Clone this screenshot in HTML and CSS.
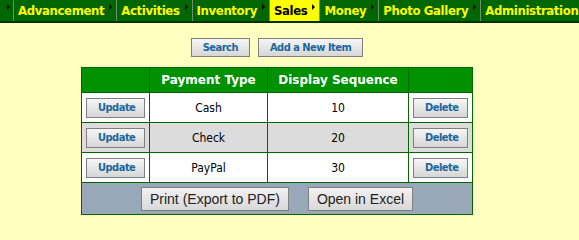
FILE: index.html
```html
<!DOCTYPE html>
<html lang="en">
<head>
    <meta charset="UTF-8">
    <title>Sales - Payment Types</title>
    <link rel="stylesheet" href="styles.css">
</head>
<body>
    <div class="menu">
        <span class="menu-item stub"></span>
        <span class="menu-item">Advancement</span>
        <span class="menu-item">Activities</span>
        <span class="menu-item">Inventory</span>
        <span class="menu-item active">Sales</span>
        <span class="menu-item">Money</span>
        <span class="menu-item">Photo Gallery</span>
        <span class="menu-item last">Administration</span>
    </div>

    <div class="content">
        <div class="actions">
            <button class="btn">Search</button>
            <button class="btn">Add a New Item</button>
        </div>

        <table class="grid">
            <tr class="grid-head">
                <th class="col-edit"></th>
                <th class="col-type">Payment Type</th>
                <th class="col-seq">Display Sequence</th>
                <th class="col-del"></th>
            </tr>
            <tr>
                <td><button class="btn">Update</button></td>
                <td>Cash</td>
                <td>10</td>
                <td><button class="btn">Delete</button></td>
            </tr>
            <tr class="alt">
                <td><button class="btn">Update</button></td>
                <td>Check</td>
                <td>20</td>
                <td><button class="btn">Delete</button></td>
            </tr>
            <tr>
                <td><button class="btn">Update</button></td>
                <td>PayPal</td>
                <td>30</td>
                <td><button class="btn">Delete</button></td>
            </tr>
            <tr class="grid-foot">
                <td colspan="4">
                    <div class="export">
                        <button class="btn-plain">Print (Export to PDF)</button>
                        <button class="btn-plain">Open in Excel</button>
                    </div>
                </td>
            </tr>
        </table>
    </div>
</body>
</html>
```

FILE: styles.css
```css
body {
    margin: 0;
    background: #ffffc0;
    font-family: 'DejaVu Sans Condensed', 'DejaVu Sans', sans-serif;
    color: #000;
}

.menu {
    display: flex;
    height: 21px;
    background: #006600;
    border-bottom: 2px solid #003300;
    overflow: hidden;
    white-space: nowrap;
}

.menu-item {
    display: flex;
    padding: 0 4px;
    border-right: 1px solid #6f8f6f;
    color: #ffff00;
    font-size: 13px;
    font-weight: bold;
    letter-spacing: -0.35px;
    line-height: 21px;
}

.menu-item::after {
    content: "";
    margin: 4px 0 0 5px;
    width: 0;
    height: 0;
    border-top: 3px solid transparent;
    border-bottom: 3px solid transparent;
    border-left: 3px solid #000;
}

.menu-item.stub {
    padding: 0 3px 0 7px;
}

.menu-item.stub::after {
    margin-left: 0;
}

.menu-item.active {
    background: #ffff00;
    color: #000;
}

.menu-item.last::after {
    display: none;
}

.content {
    width: 392px;
    margin: 15px 0 0 81px;
}

.actions {
    display: flex;
    justify-content: center;
    gap: 8px;
    margin-bottom: 10px;
}

.btn {
    height: 20px;
    padding: 0 11px;
    background: linear-gradient(#f6f6f6, #d6d6d6);
    border: 1px solid #7f7f7f;
    color: #1a679c;
    font-family: 'DejaVu Sans Condensed', 'DejaVu Sans', sans-serif;
    font-size: 11px;
    font-weight: bold;
    letter-spacing: -0.5px;
}

.actions .btn {
    height: 19px;
}

.grid {
    width: 392px;
    border-collapse: collapse;
    border: 1px solid #006600;
}

.grid th,
.grid td {
    border: 1px solid #006600;
    padding: 0;
    text-align: center;
    font-size: 12px;
}

.grid-head th {
    height: 24px;
    background: #009100;
    color: #fff;
    font-family: 'DejaVu Sans', sans-serif;
    font-weight: bold;
}

.col-edit { width: 67px; }
.col-type { width: 117px; }
.col-seq { width: 140px; }

.grid td {
    height: 29px;
    background: #fff;
}

.grid tr.alt td {
    background: #dcdcdc;
}

.grid td .btn {
    width: 59px;
}

.grid td:last-child .btn {
    width: 55px;
}

.grid tr.grid-foot td {
    height: 31px;
    background: #98a8b8;
}

.export {
    display: flex;
    justify-content: center;
    gap: 19px;
}

.btn-plain {
    height: 24px;
    padding: 0 8px;
    background: linear-gradient(#f2f2f2, #d8d8d8);
    border: 1px solid #7f7f7f;
    color: #222;
    font-family: 'Liberation Sans', Arial, sans-serif;
    font-size: 14px;
}
```
